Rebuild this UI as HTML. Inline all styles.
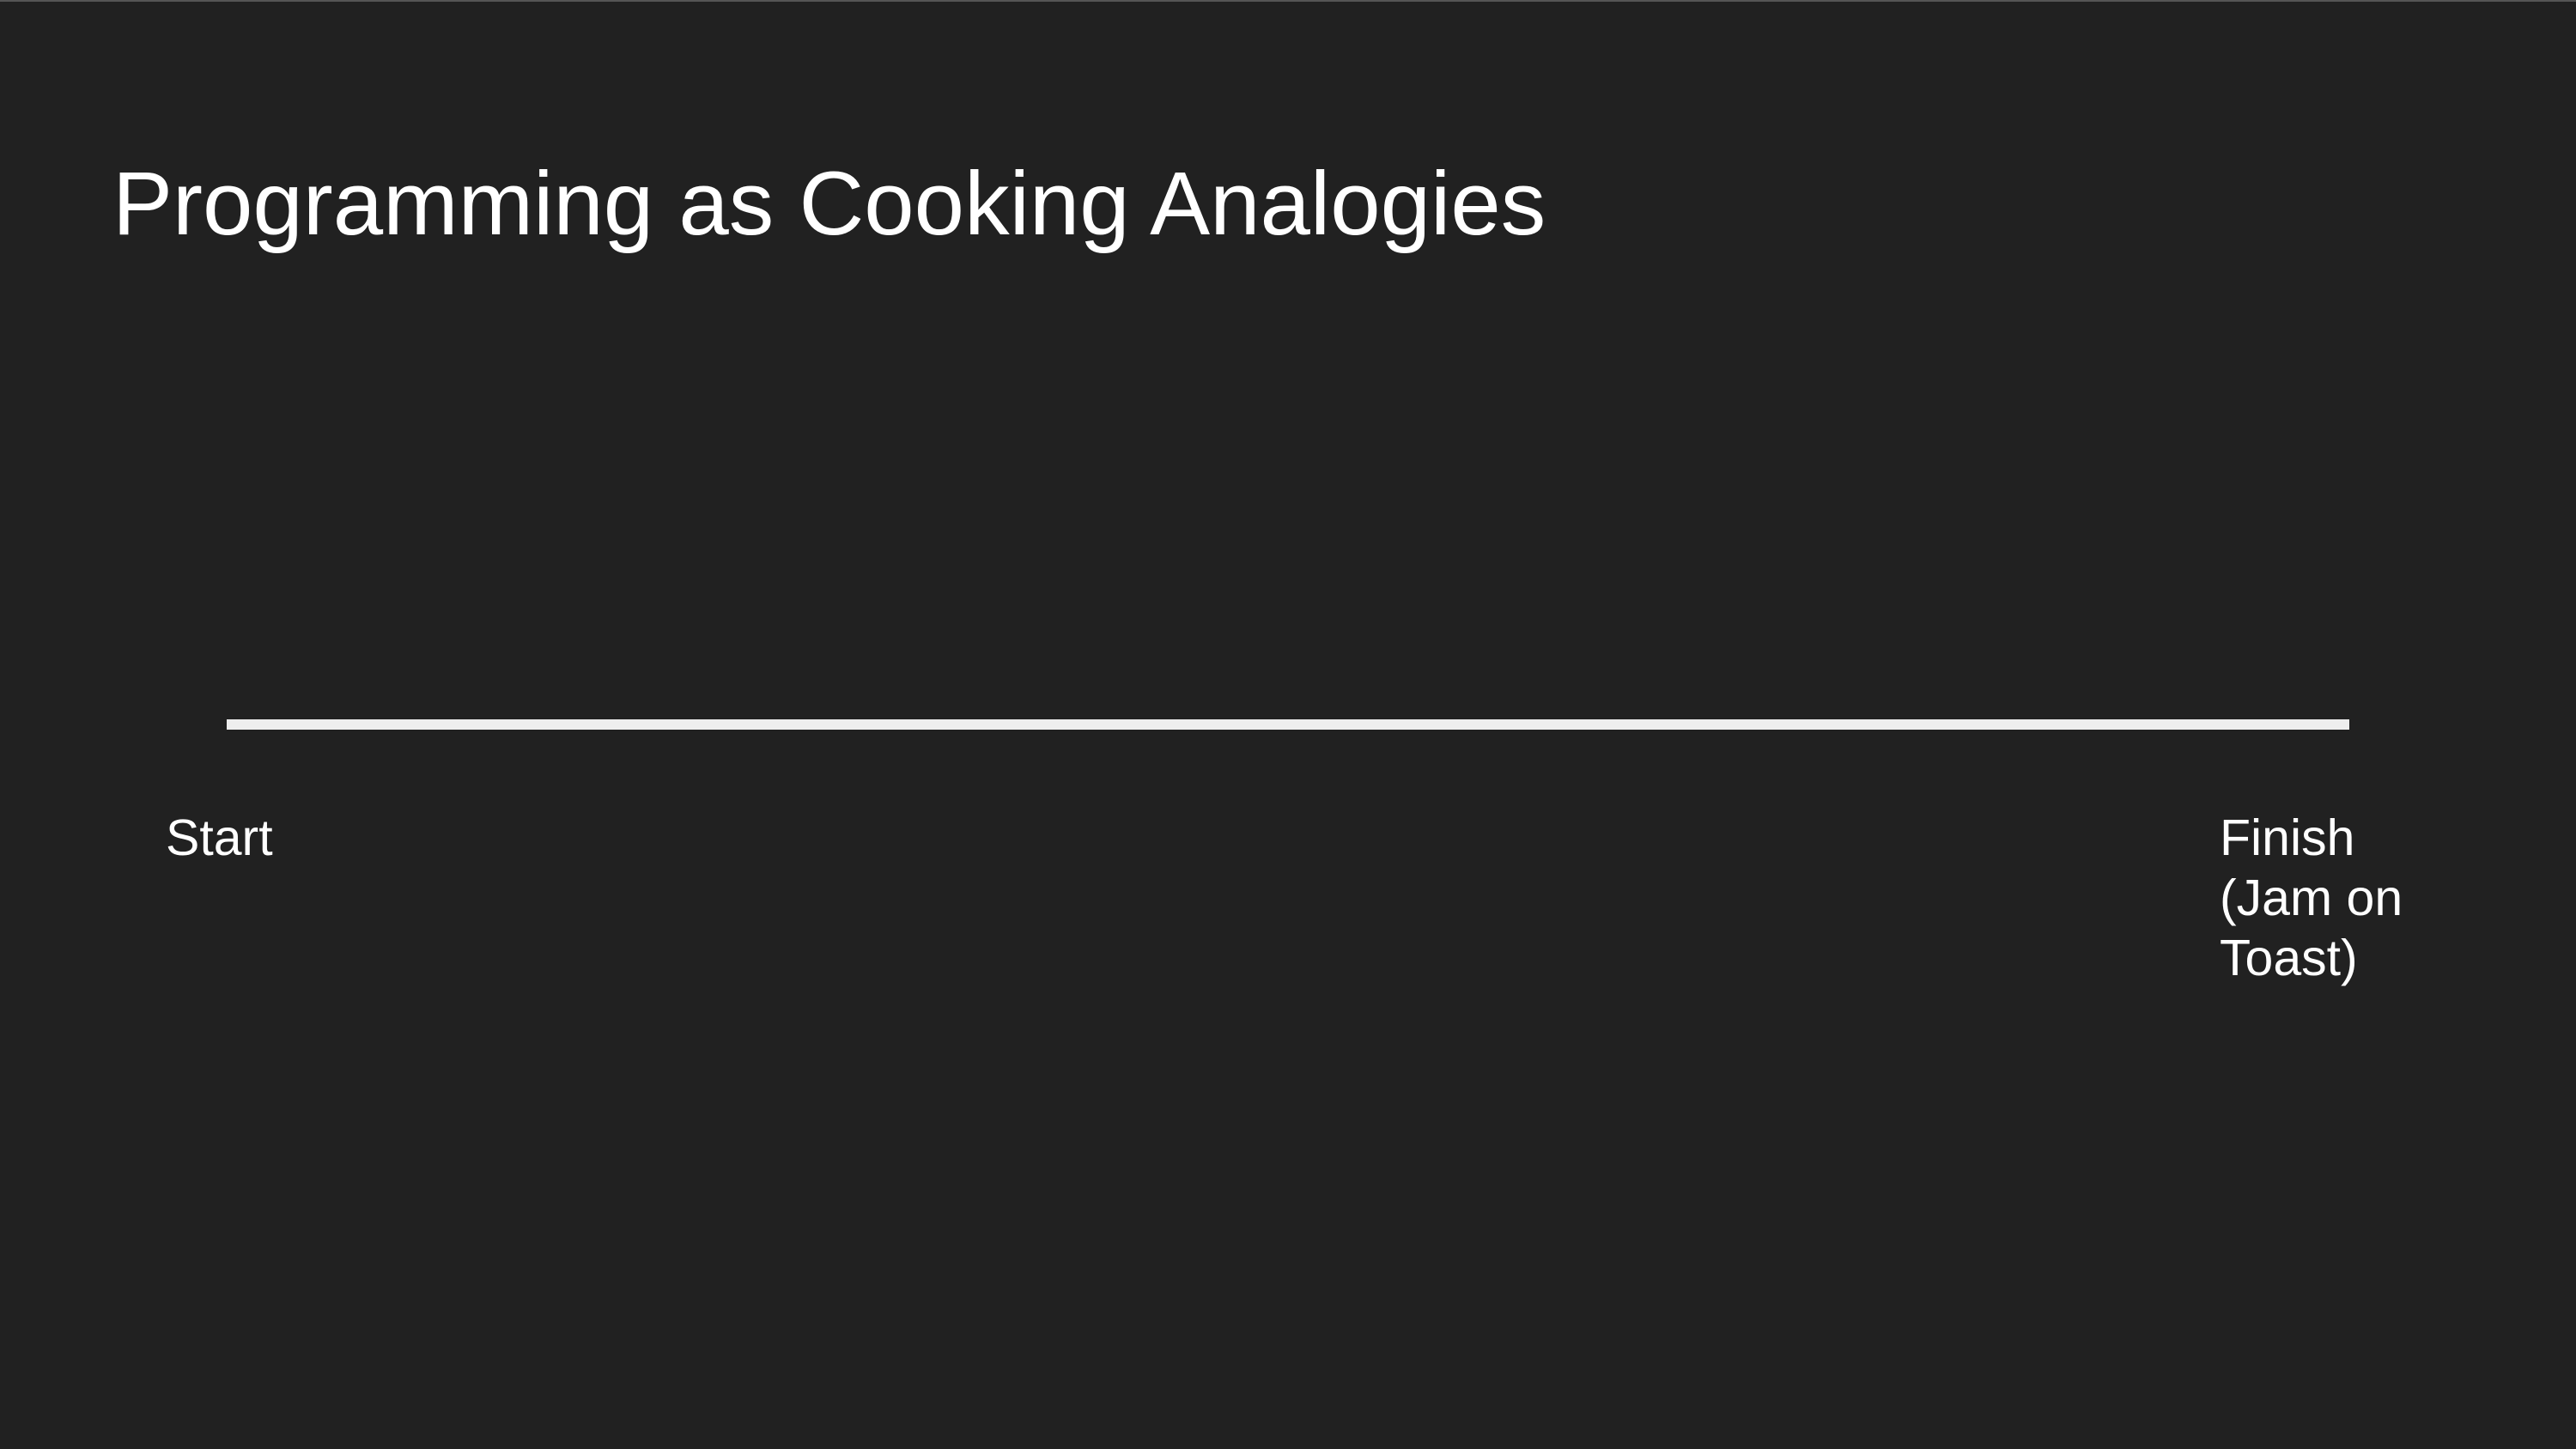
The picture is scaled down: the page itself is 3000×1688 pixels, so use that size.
<!DOCTYPE html>
<html><head><meta charset="utf-8"><style>
html,body{margin:0;padding:0;}
body{width:3000px;height:1688px;background:#212121;position:relative;overflow:hidden;font-family:"Liberation Sans",Arial,sans-serif;color:#fff;}
.top{position:absolute;left:0;top:0;width:3000px;height:2px;background:#555;}
.t{position:absolute;left:131px;top:178px;font-size:105px;line-height:120px;white-space:nowrap;}
.bar{position:absolute;left:264px;top:838px;width:2472px;height:12px;background:#eeeeee;}
.s{position:absolute;font-size:59px;line-height:70px;}
</style></head><body>
<div class="top"></div>
<div class="t">Programming as Cooking Analogies</div>
<div class="bar"></div>
<div class="s" style="left:193px;top:941px;">Start</div>
<div class="s" style="left:2585px;top:941px;">Finish<br>(Jam on<br>Toast)</div>
</body></html>
